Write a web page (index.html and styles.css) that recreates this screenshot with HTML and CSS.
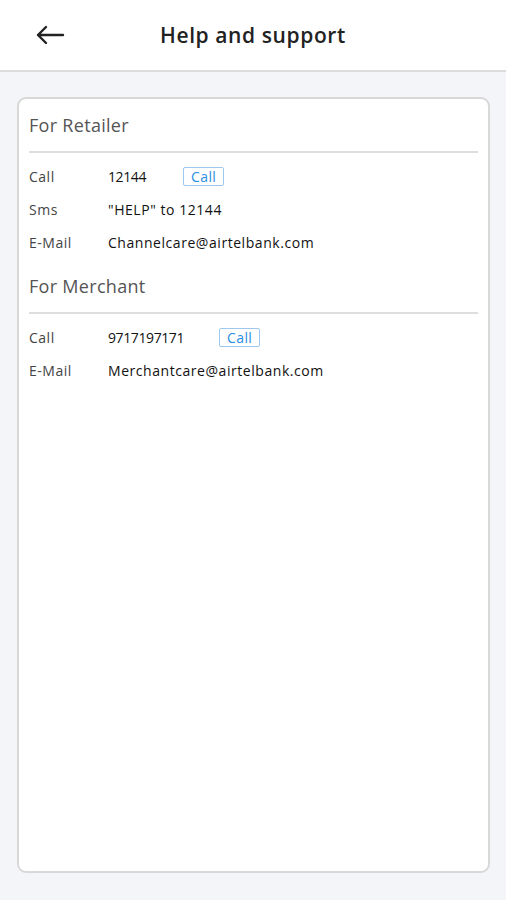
FILE: index.html
```html
<!DOCTYPE html>
<html>
<head>
<meta charset="utf-8">
<link rel="stylesheet" href="styles.css">
</head>
<body>
<header class="topbar">
  <span class="back">
    <svg width="30" height="20" viewBox="0 0 30 20"><path d="M28 10H3M11 2L3 10L11 18" fill="none" stroke="#222" stroke-width="2.4" stroke-linecap="round" stroke-linejoin="round"/></svg>
  </span>
  <h1 class="title">Help and support</h1>
</header>
<main class="content">
  <section class="card">
    <h2 class="section-title">For Retailer</h2>
    <div class="divider"></div>
    <div class="row"><span class="label">Call</span><span class="value num v-short">12144</span><span class="btn">Call</span></div>
    <div class="row"><span class="label">Sms</span><span class="value">"HELP" to 12144</span></div>
    <div class="row"><span class="label">E-Mail</span><span class="value">Channelcare@airtelbank.com</span></div>
    <h2 class="section-title second">For Merchant</h2>
    <div class="divider"></div>
    <div class="row"><span class="label">Call</span><span class="value num v-long">9717197171</span><span class="btn">Call</span></div>
    <div class="row"><span class="label">E-Mail</span><span class="value">Merchantcare@airtelbank.com</span></div>
  </section>
</main>
</body>
</html>
```
FILE: styles.css
```css
html, body { margin: 0; padding: 0; }
body {
  width: 506px; height: 900px;
  background: #f4f5f9;
  font-family: "Open Sans", Lato, sans-serif;
  color: #222;
  overflow: hidden;
}
.topbar {
  height: 70px;
  background: #fff;
  border-bottom: 2px solid #dcdcdc;
  display: flex; align-items: center; justify-content: center;
  position: relative;
}
.back { position: absolute; left: 35px; top: 25px; line-height: 0; }
.title { margin: 0; font-size: 21px; font-weight: 600; color: #222; letter-spacing: 0.6px; margin-top: -1px; }
.content { padding: 25px 16px 0 17px; }
.card {
  height: 772px;
  background: #fff;
  border: 2px solid #d8d8d8;
  border-radius: 9px;
  padding: 0 10px;
}
.section-title {
  margin: 0; font-size: 18px; font-weight: 400; color: #555;
  letter-spacing: 0.3px;
  line-height: 20px; padding: 16px 0 16px;
}
.section-title.second { padding-top: 17px; }
.divider { height: 2px; background: #dedede; margin-bottom: 7px; }
.row { display: flex; align-items: center; height: 33px; font-size: 14px; letter-spacing: 0.4px; }
.label { width: 79px; color: #444; font-size: 14px; letter-spacing: 0.5px; }
.value { color: #111; letter-spacing: 0.55px; }
.value.num { letter-spacing: -0.4px; }
.v-short { width: 75px; }
.v-long { width: 111px; }
.btn {
  border: 1px solid #9fc8ef; border-radius: 2px; color: #2b8ee2;
  padding: 0 7px; font-size: 14px; line-height: 17px;
}
```
